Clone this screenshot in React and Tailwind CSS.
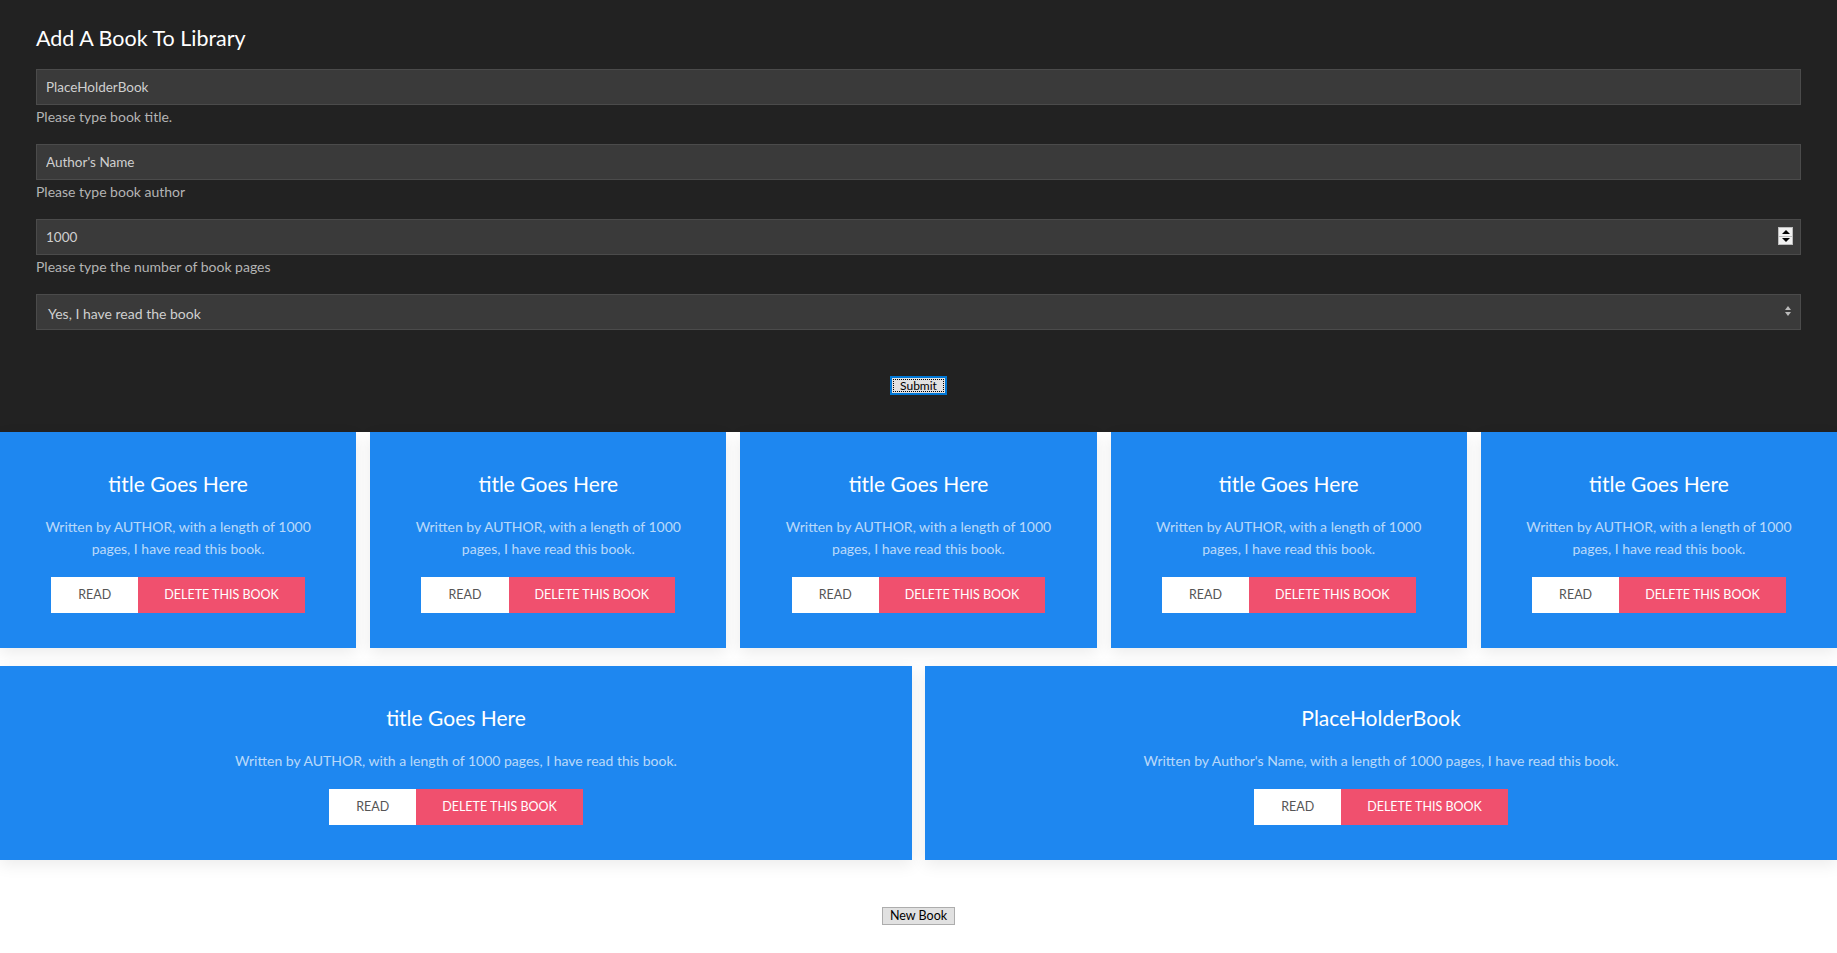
import React from "react";

const books = [
  { title: "title Goes Here", author: "AUTHOR", pages: 1000 },
  { title: "title Goes Here", author: "AUTHOR", pages: 1000 },
  { title: "title Goes Here", author: "AUTHOR", pages: 1000 },
  { title: "title Goes Here", author: "AUTHOR", pages: 1000 },
  { title: "title Goes Here", author: "AUTHOR", pages: 1000 },
];

const bottomBooks = [
  { title: "title Goes Here", author: "AUTHOR", pages: 1000 },
  { title: "PlaceHolderBook", author: "Author's Name", pages: 1000 },
];

function BookCard({ book }) {
  return (
    <div className="bg-[#1e87f0] px-[40px] pt-[38px] pb-[35px] text-center shadow-[0_5px_15px_rgba(0,0,0,0.08)]">
      <h3 className="text-[21px] leading-[28px] text-white">{book.title}</h3>
      <p className="mt-[18px] text-[14px] leading-[22px] text-white/70">
        Written by {book.author}, with a length of {book.pages} pages, I have read this book.
      </p>
      <div className="mt-[17px] flex justify-center">
        <button className="h-[36px] bg-white px-[27px] text-[12.5px] uppercase text-[#555]">Read</button>
        <button className="h-[36px] bg-[#f0506e] px-[26px] text-[12.5px] uppercase text-white">Delete this book</button>
      </div>
    </div>
  );
}

function Field({ value, help, spinner }) {
  return (
    <div className="mb-[19px]">
      <div className="relative">
        <input
          readOnly
          value={value}
          className="h-[36px] w-full border border-[#4b4b4b] bg-[#3a3a3a] px-[9px] text-[13.5px] text-[#cfcfcf] outline-none"
        />
        {spinner && (
          <div className="absolute right-[8px] top-[8px] flex h-[18px] w-[15px] flex-col border border-[#bdbdbd] bg-[#f0f0f0]">
            <div className="flex flex-1 items-center justify-center border-b border-[#bdbdbd]">
              <div className="h-0 w-0 border-x-[4px] border-b-[4px] border-x-transparent border-b-black" />
            </div>
            <div className="flex flex-1 items-center justify-center">
              <div className="h-0 w-0 border-x-[4px] border-t-[4px] border-x-transparent border-t-black" />
            </div>
          </div>
        )}
      </div>
      <p className="mt-[4px] text-[14px] leading-[16px] text-[#b4b4b4]">{help}</p>
    </div>
  );
}

export default function App() {
  return (
    <div className="min-h-screen bg-white font-['Lato',sans-serif]">
      <div className="bg-[#222222] px-[36px] pt-[25px] pb-[37px]">
        <h1 className="text-[21.5px] leading-[26px] text-white">Add A Book To Library</h1>
        <div className="mt-[18px]">
          <Field value="PlaceHolderBook" help="Please type book title." />
          <Field value="Author's Name" help="Please type book author" />
          <Field value="1000" help="Please type the number of book pages" spinner />
          <div className="relative">
            <div className="flex h-[36px] w-full items-center border border-[#4b4b4b] bg-[#3a3a3a] px-[11px] pt-[2px] text-[14px] text-[#cfcfcf]">
              Yes, I have read the book
            </div>
            <div className="absolute right-[10px] top-[12px] flex flex-col items-center gap-[2px]">
              <div className="h-0 w-0 border-x-[3px] border-b-[4px] border-x-transparent border-b-[#bbbbbb]" />
              <div className="h-0 w-0 border-x-[3px] border-t-[4px] border-x-transparent border-t-[#bbbbbb]" />
            </div>
          </div>
        </div>
        <div className="mt-[46px] flex justify-center">
          <button className="flex h-[19px] w-[57px] items-center justify-center border-2 border-[#0078d7] bg-[#e1e1e1] p-[1px]">
            <span className="flex h-full w-full items-center justify-center border border-dotted border-black text-[12px] leading-none text-black">
              Submit
            </span>
          </button>
        </div>
      </div>

      <div className="flex flex-col gap-[18px]">
        <div className="grid grid-cols-5 gap-[14px]">
          {books.map((b, i) => (
            <BookCard key={i} book={b} />
          ))}
        </div>
        <div className="grid grid-cols-2 gap-[13px]">
          {bottomBooks.map((b, i) => (
            <BookCard key={i} book={b} />
          ))}
        </div>
      </div>

      <div className="flex justify-center pt-[47px] pb-[28px]">
        <button className="h-[18px] border border-[#adadad] bg-[#e1e1e1] px-[7px] text-[12.5px] leading-none text-black">
          New Book
        </button>
      </div>
    </div>
  );
}
